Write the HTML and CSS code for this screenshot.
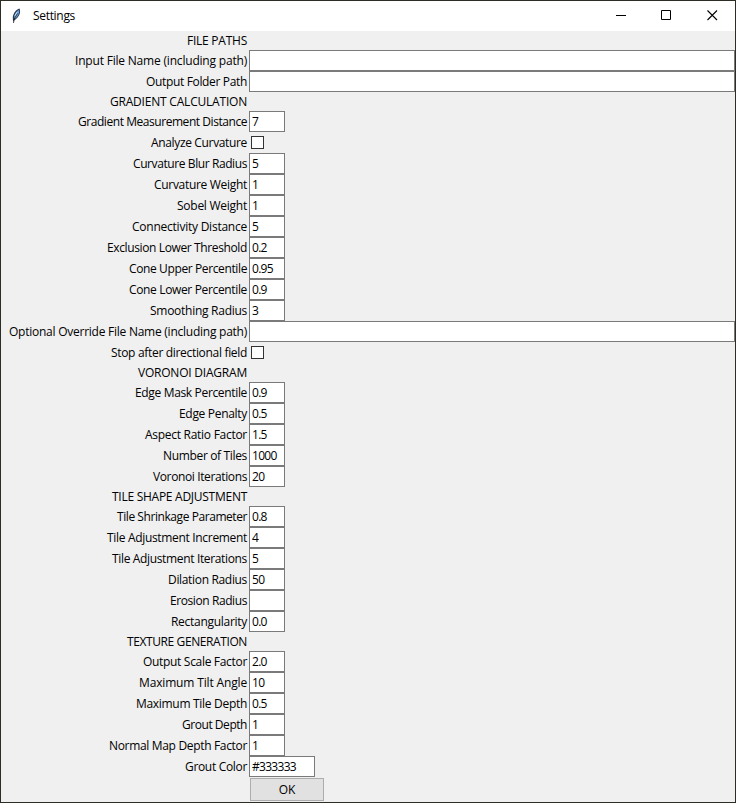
FILE: index.html
```html
<!DOCTYPE html>
<html lang="en">
<head>
<meta charset="utf-8">
<title>Settings</title>
<link rel="stylesheet" href="styles.css">
</head>
<body>
<div class="window">
  <header class="titlebar">
    <svg class="feather" width="12" height="18" viewBox="0 0 12 18"><path d="M2 15L1.800 10C2.500 6 5 2.500 8.500 1.500C10 5 8.500 9.500 4.500 12.500L3 13.500Z" fill="#26384c"/><path d="M3 11C3.200 7 5.500 4 8.200 2.700C8.400 6 7 9.500 4 11.800Z" fill="#68a5e6"/><path d="M2.500 16L3.200 12L6.500 6.500" fill="none" stroke="#222" stroke-width=".8"/><path d="M3.800 8.800L6 5.200" stroke="#d5e5f7" stroke-width=".9"/></svg>
    <span class="title" data-width="42">Settings</span>
    <div class="controls">
      <svg width="46" height="30" viewBox="0 0 46 30"><path d="M18 14.500H28" stroke="#000"/></svg>
      <svg width="46" height="30" viewBox="0 0 46 30"><path d="M17.500 9.500H26.500V18.500H17.500Z" fill="none" stroke="#000"/></svg>
      <svg width="46" height="30" viewBox="0 0 46 30"><path d="M17.500 9.500L27 19M27 9.500L17.500 19" stroke="#000" stroke-width="1.100"/></svg>
    </div>
  </header>
  <main class="form" id="form"></main>
  <div class="actions"><button class="ok" type="button">OK</button></div>
</div>
<script src="form.js"></script>
</body>
</html>
```
FILE: styles.css
```css
* { box-sizing: border-box; }
body {
  margin: 0;
  height: 803px;
  padding: 1px;
  background: #2d2c25;
  color: #000;
  font: 12px/16px "Open Sans", "Noto Sans", sans-serif;
  overflow: hidden;
}
.window { height: 801px; background: #f0f0f0; }
.titlebar { display: flex; align-items: center; height: 30px; background: #fff; }
.feather { margin-left: 10px; margin-right: 10px; }
.title { white-space: nowrap; }
.controls { display: flex; margin-left: auto; margin-right: -1px; }
.controls svg { display: block; }
.row { display: grid; grid-template-columns: 246px 1fr; column-gap: 2px; height: 21px; align-items: center; }
.row.heading { height: 19px; }
.label { justify-self: end; white-space: nowrap; }
.field {
  width: 36px;
  height: 21px;
  padding: 1px 2px;
  border: 1px solid #7a7a7a;
  background: #fff;
  line-height: 17px;
  letter-spacing: -0.7px;
}
.field.wide { width: 486px; }
.field.medium { width: 66px; }
.check { width: 13px; height: 13px; margin-left: 2px; border: 1px solid #333; background: #fff; }
.actions { padding: 1px 0 0 249px; }
.ok {
  display: block;
  width: 74px;
  height: 23px;
  padding: 0;
  border: 1px solid #adadad;
  background: #e1e1e1;
  color: #000;
  font: inherit;
}
```
FILE: form.js
```js
// [kind, label, label width, value]
const rows = [
  ["heading", "FILE PATHS", 60],
  ["wide", "Input File Name (including path)", 172, ""],
  ["wide", "Output Folder Path", 101, ""],
  ["heading", "GRADIENT CALCULATION", 137],
  ["small", "Gradient Measurement Distance", 169, "7"],
  ["check", "Analyze Curvature", 96],
  ["small", "Curvature Blur Radius", 114, "5"],
  ["small", "Curvature Weight", 93, "1"],
  ["small", "Sobel Weight", 70, "1"],
  ["small", "Connectivity Distance", 115, "5"],
  ["small", "Exclusion Lower Threshold", 140, "0.2"],
  ["small", "Cone Upper Percentile", 118, "0.95"],
  ["small", "Cone Lower Percentile", 118, "0.9"],
  ["small", "Smoothing Radius", 97, "3"],
  ["wide", "Optional Override File Name (including path)", 238, ""],
  ["check", "Stop after directional field", 136],
  ["heading", "VORONOI DIAGRAM", 109],
  ["small", "Edge Mask Percentile", 112, "0.9"],
  ["small", "Edge Penalty", 68, "0.5"],
  ["small", "Aspect Ratio Factor", 102, "1.5"],
  ["small", "Number of Tiles", 84, "1000"],
  ["small", "Voronoi Iterations", 94, "20"],
  ["heading", "TILE SHAPE ADJUSTMENT", 135],
  ["small", "Tile Shrinkage Parameter", 130, "0.8"],
  ["small", "Tile Adjustment Increment", 140, "4"],
  ["small", "Tile Adjustment Iterations", 135, "5"],
  ["small", "Dilation Radius", 79, "50"],
  ["small", "Erosion Radius", 77, ""],
  ["small", "Rectangularity", 76, "0.0"],
  ["heading", "TEXTURE GENERATION", 120],
  ["small", "Output Scale Factor", 104, "2.0"],
  ["small", "Maximum Tilt Angle", 108, "10"],
  ["small", "Maximum Tile Depth", 111, "0.5"],
  ["small", "Grout Depth", 65, "1"],
  ["small", "Normal Map Depth Factor", 138, "1"],
  ["medium", "Grout Color", 62, "#333333"]
];

const form = document.getElementById("form");
for (const [kind, text, width, value] of rows) {
  const row = document.createElement("div");
  row.className = kind === "heading" ? "row heading" : "row";
  const label = document.createElement("span");
  label.className = "label";
  label.textContent = text;
  label.dataset.width = width;
  row.append(label);
  if (kind !== "heading") {
    const control = document.createElement("div");
    control.className = kind === "check" ? "check" : `field ${kind}`;
    if (value) control.textContent = value;
    row.append(control);
  }
  form.append(row);
}

for (const el of document.querySelectorAll("[data-width]")) {
  const natural = el.getBoundingClientRect().width;
  el.style.letterSpacing = `${(el.dataset.width - natural) / el.textContent.length}px`;
}
```
